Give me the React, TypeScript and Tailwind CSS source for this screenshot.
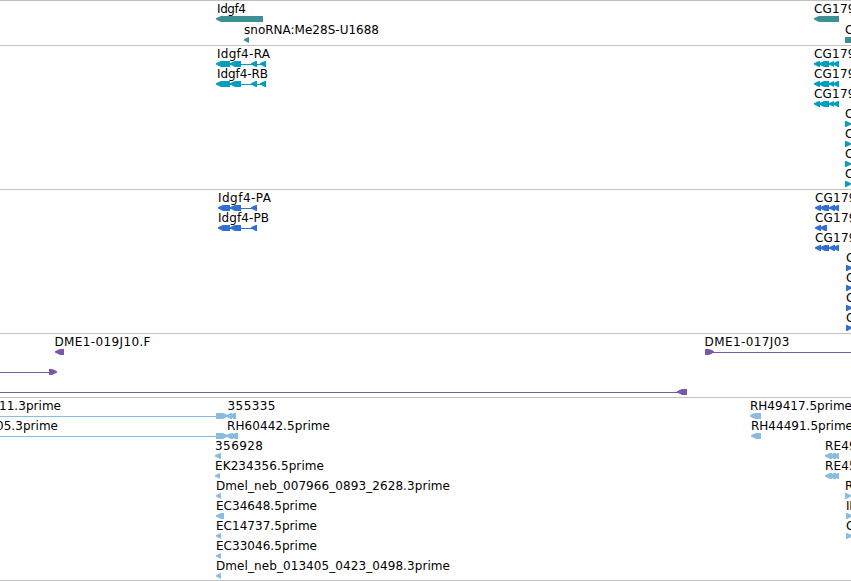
type Dir = 'l' | 'r'

// [start, end, direction], 'b' is a plain block without an arrow head
type Block = [number, number, Dir | 'b']

type Feature = {
  label?: string
  x?: number
  width?: number
  line?: [number, number]
  blocks: Block[]
}

type Track = {
  id: string
  color: string
  height: string
  pitch: number
  rows: Feature[][]
}

const cgShort: Block[] = [[814, 820, 'l'], [819, 829, 'l'], [829, 834, 'l'], [833, 839, 'l']]
const cgProtein: Block[] = [[815, 821, 'l'], [820, 829, 'l'], [829, 835, 'l'], [833, 839, 'l']]
const idgfRna: Block[] = [[216, 230, 'l'], [230, 241, 'l'], [251, 257, 'l'], [260, 266, 'l']]
const idgfProtein: Block[] = [[218, 230, 'l'], [230, 241, 'l'], [251, 257, 'l']]
const reBlocks: Block[] = [[825, 832, 'l'], [829, 836, 'l'], [833, 839, 'l']]

const cgRna: Feature = { label: 'CG17907', x: 814, width: 57, line: [816, 838], blocks: cgShort }
const edgeRna: Feature = { label: 'CG8772', x: 845, width: 46, blocks: [[845, 851, 'r']] }
const edgeProtein: Feature = { label: 'CG8772', x: 846, width: 46, blocks: [[846, 852, 'r']] }

const tracks: Track[] = [
  {
    id: 'gene',
    color: '#3d8f94',
    height: 'h-[45px]',
    pitch: 21,
    rows: [
      [
        { label: 'Idgf4', x: 217, width: 29, blocks: [[216, 263, 'l']] },
        { label: 'CG17907', x: 814, width: 57, blocks: [[814, 839, 'l']] },
      ],
      [
        { label: 'snoRNA:Me28S-U1688', x: 244, width: 135, blocks: [[244, 249, 'l']] },
        { label: 'CG8772', x: 845, width: 46, blocks: [[845, 860, 'b']] },
      ],
    ],
  },
  {
    id: 'transcript',
    color: '#009fbf',
    height: 'h-[144px]',
    pitch: 20,
    rows: [
      [{ label: 'Idgf4-RA', x: 217, width: 53, line: [218, 265], blocks: idgfRna }, cgRna],
      [{ label: 'Idgf4-RB', x: 217, width: 51, line: [218, 265], blocks: idgfRna }, cgRna],
      [cgRna],
      [edgeRna],
      [edgeRna],
      [edgeRna],
      [edgeRna],
    ],
  },
  {
    id: 'protein',
    color: '#3070d0',
    height: 'h-[144px]',
    pitch: 20,
    rows: [
      [
        { label: 'Idgf4-PA', x: 218, width: 53, line: [220, 256], blocks: idgfProtein },
        { label: 'CG17907', x: 815, width: 57, line: [817, 838], blocks: cgProtein },
      ],
      [
        { label: 'Idgf4-PB', x: 218, width: 51, line: [220, 256], blocks: idgfProtein },
        { label: 'CG17907', x: 815, width: 57, blocks: [[815, 821, 'l'], [820, 827, 'l']] },
      ],
      [{ label: 'CG17907', x: 815, width: 57, line: [817, 838], blocks: cgProtein }],
      [edgeProtein],
      [edgeProtein],
      [edgeProtein],
      [edgeProtein],
    ],
  },
  {
    id: 'bac',
    color: '#7858a8',
    height: 'h-[64px]',
    pitch: 20,
    rows: [
      [
        { label: 'DME1-019J10.F', x: 54.5, width: 96, blocks: [[55, 64, 'l']] },
        { label: 'DME1-017J03', x: 704.5, width: 85, line: [708, 851], blocks: [[705, 714, 'r']] },
      ],
      [{ line: [0, 50], blocks: [[49, 57, 'r']] }],
      [{ line: [0, 680], blocks: [[677, 687, 'l']] }],
    ],
  },
  {
    id: 'est',
    color: '#88bde0',
    height: 'h-[183px]',
    pitch: 20,
    rows: [
      [
        { label: '11.3prime', x: -1, width: 62, line: [0, 218], blocks: [[216, 228, 'r']] },
        { label: '355335', x: 227.5, width: 48, line: [224, 232], blocks: [[226, 232, 'l'], [229, 236, 'l']] },
        { label: 'RH49417.5prime', x: 750, width: 102, blocks: [[750, 761, 'l']] },
      ],
      [
        { label: '05.3prime', x: -4, width: 62, line: [0, 218], blocks: [[216, 228, 'r']] },
        { label: 'RH60442.5prime', x: 227, width: 103, line: [224, 232], blocks: [[226, 233, 'l'], [230, 238, 'l']] },
        { label: 'RH44491.5prime', x: 751, width: 102, blocks: [[751, 761, 'l']] },
      ],
      [
        { label: '356928', x: 215, width: 48, blocks: [[215, 221, 'l']] },
        { label: 'RE49005', x: 825, width: 55, blocks: reBlocks },
      ],
      [
        { label: 'EK234356.5prime', x: 215, width: 109, blocks: [[215, 220, 'l']] },
        { label: 'RE45904', x: 825, width: 55, blocks: reBlocks },
      ],
      [
        { label: 'Dmel_neb_007966_0893_2628.3prime', x: 216, width: 234, blocks: [[216, 221, 'l']] },
        { label: 'RE1', x: 845, width: 24, blocks: [[845, 851, 'r']] },
      ],
      [
        { label: 'EC34648.5prime', x: 216, width: 101, blocks: [[216, 224, 'l']] },
        { label: 'IP1', x: 846, width: 18, blocks: [[846, 852, 'r']] },
      ],
      [
        { label: 'EC14737.5prime', x: 216, width: 101, blocks: [[216, 221, 'l']] },
        { label: 'CO3', x: 846, width: 26, blocks: [[846, 852, 'r']] },
      ],
      [{ label: 'EC33046.5prime', x: 216, width: 101, blocks: [[216, 221, 'l']] }],
      [{ label: 'Dmel_neb_013405_0423_0498.3prime', x: 216, width: 234, blocks: [[216, 221, 'l']] }],
    ],
  },
]

// heads are slightly rounded: narrow tip, then a quick flare to full height
function blockPoints([a, b, dir]: Block) {
  if (dir === 'l') {
    return `${a},18.3 ${a + 2},17.3 ${a + 5},16 ${b},16 ${b},22 ${a + 5},22 ${a + 2},20.4 ${a},19.4`
  }
  if (dir === 'r') {
    return `${a},16 ${b - 5},16 ${b - 2},17.3 ${b},18.3 ${b},19.4 ${b - 2},20.4 ${b - 5},22 ${a},22`
  }
  return `${a},16 ${b},16 ${b},22 ${a},22`
}

function FeatureGlyph({ feature, color }: { feature: Feature; color: string }) {
  const { label, x, width, line, blocks } = feature
  return (
    <g>
      {label && (
        <text x={x} y={13} textLength={width} className="fill-black text-[12px]">
          {label}
        </text>
      )}
      {line && <rect x={line[0]} y={19} width={line[1] - line[0]} height={1} fill={color} />}
      {blocks.map((block, i) => (
        <polygon key={i} points={blockPoints(block)} fill={color} />
      ))}
    </g>
  )
}

function TrackPanel({ track }: { track: Track }) {
  const height = track.rows.length * 21 + 4
  return (
    <section className={`w-full overflow-hidden border-t border-[#c0c0c0] ${track.height}`}>
      {/* shifted up by the border so rows count from the panel's outer edge */}
      <svg viewBox={`0 1 851 ${height}`} width={851} height={height} className="block">
        {track.rows.map((row, i) => (
          <g key={i} transform={`translate(0 ${i * track.pitch})`}>
            {row.map((feature, j) => (
              <FeatureGlyph key={j} feature={feature} color={track.color} />
            ))}
          </g>
        ))}
      </svg>
    </section>
  )
}

export default function App() {
  return (
    <main className="flex h-[581px] w-[851px] flex-col overflow-hidden border-b border-[#c0c0c0] bg-white font-['DejaVu_Sans',sans-serif]">
      {tracks.map((track) => (
        <TrackPanel key={track.id} track={track} />
      ))}
    </main>
  )
}
